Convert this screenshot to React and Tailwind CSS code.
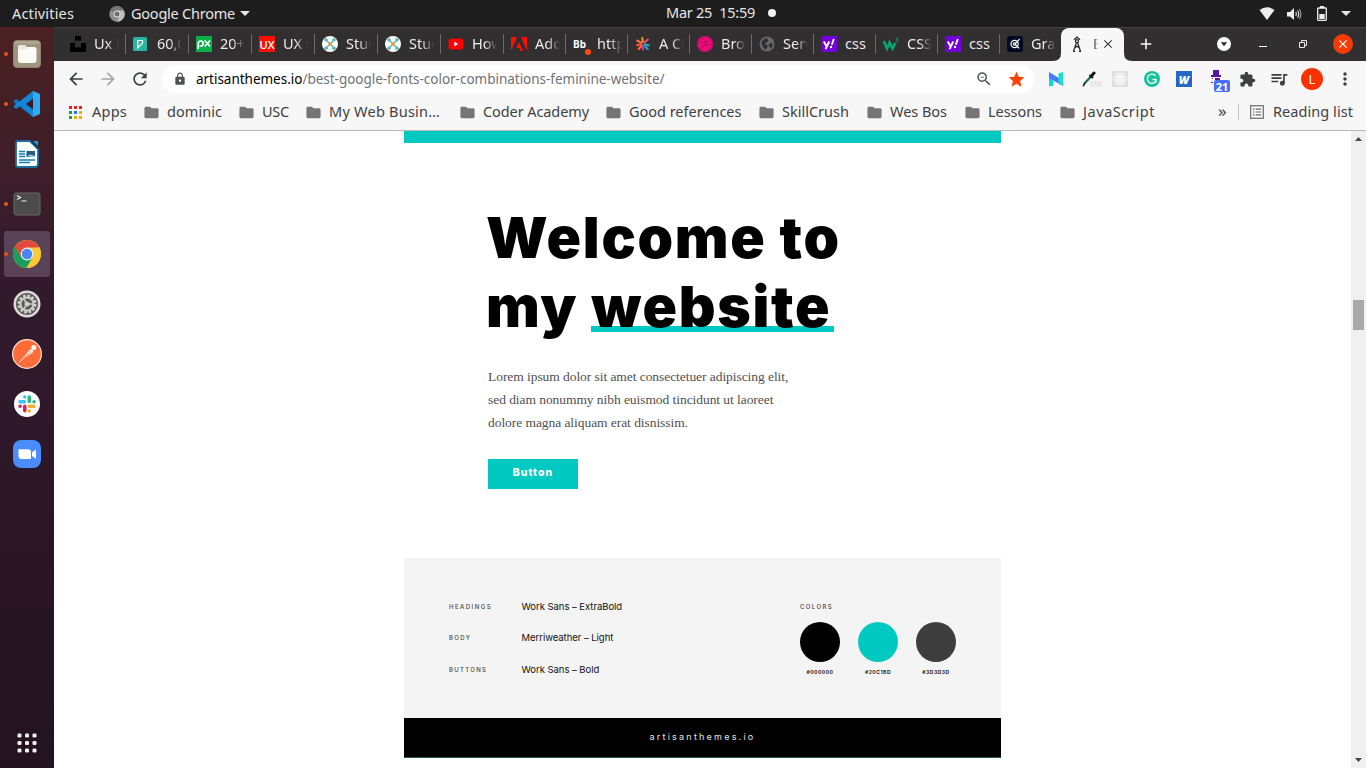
import React from "react";
import { MdArrowBack, MdArrowForward, MdRefresh, MdLock, MdZoomOut, MdStar, MdExtension, MdQueueMusic, MdMoreVert, MdFolder, MdClose, MdAdd, MdPublic } from "react-icons/md";
import { SiDribbble } from "react-icons/si";

const f = "size-4 shrink-0";

const Unsplash = () => (
  <svg className={f} viewBox="0 0 16 16"><path d="M5 0h6v4.500H5zM0 7h5v4.500h6V7h5v9H0z" fill="#000" /></svg>
);
const Teal = () => (
  <svg className={f} viewBox="0 0 16 16"><rect x="0" y="1" width="14" height="14" rx="1.500" fill="#2bb3a3" /><path d="M4.800 12V4.500h4.700v2.700L7.300 9.500H7L4.800 12z" fill="none" stroke="#fff" strokeWidth="1.200" /></svg>
);
const Px = () => (
  <svg className={f} viewBox="0 0 16 16"><rect width="16" height="16" fill="#0bb04b" /><path d="M2.200 13V7.500a2.500 2.500 0 1 1 2.500 2.500H3.500M8.700 4.500l5.300 6M14 4.500l-5.300 6" fill="none" stroke="#fff" strokeWidth="1.700" /></svg>
);
const Ux = () => (
  <span className="flex size-4 shrink-0 items-center justify-center bg-[#fa0f00] font-['Open_Sans'] text-[11px] leading-none font-semibold text-white">UX</span>
);
const Cross = () => (
  <svg className={f} viewBox="0 0 16 16"><circle cx="8" cy="8" r="8" fill="#fff" /><path d="M3 3l10 10M13 3L3 13" stroke="#5bb8b4" strokeWidth="1.500" /><g fill="#5bb8b4"><circle cx="4" cy="3.800" r="1.800" /><circle cx="12" cy="3.800" r="1.800" /><circle cx="4" cy="12.200" r="1.800" /><circle cx="12" cy="12.200" r="1.800" /></g><circle cx="8" cy="8" r="1.700" fill="#f59b23" /></svg>
);
const Tube = () => (
  <svg className={f} viewBox="0 0 16 16"><rect x="0.500" y="2.500" width="15" height="11" rx="2.800" fill="#f00" /><path d="M6.300 5.800v4.400L10.200 8z" fill="#fff" /></svg>
);
const Adobe = () => (
  <svg className={f} viewBox="0 0 16 16"><path d="M0 1h6L0 15zM16 1h-6l6 14zM8 6l4 9H9.300l-1.200-3H5.300z" fill="#fa0f00" /></svg>
);
const Bb = () => (
  <span className="relative flex size-4 shrink-0 items-center font-['Noto_Sans'] text-[10px] leading-none font-bold text-white">Bb<i className="absolute -right-0.5 -bottom-[3px] size-1.5 rounded-full bg-[#ff4a10]" /></span>
);
const Burst = () => (
  <svg className={f} viewBox="0 0 16 16" strokeWidth="2.100" strokeLinecap="round"><path d="M7.300 2l.5 4" stroke="#f7941d" /><path d="M2.300 4.500l4 2.500" stroke="#ff6d42" /><path d="M9.500 6.500l3.300-3" stroke="#d6508a" /><path d="M2 9.300l4-.8" stroke="#ff5630" /><path d="M10 8.500l3.700.8" stroke="#1bb9b0" /><path d="M6.500 10l-2.800 3" stroke="#ff6d42" /><path d="M8 9v4.800" stroke="#d9359a" /><path d="M10 10.300l2.700 2.700" stroke="#18a8d8" /></svg>
);
const Dribbble = () => (
  <span className="flex size-4 shrink-0 items-center justify-center rounded-full bg-[#f50a80]"><SiDribbble className="size-4 text-[#b5125f]" /></span>
);
const Globe = () => (
  <svg className={f} viewBox="0 0 16 16"><circle cx="8" cy="8" r="7.500" fill="#65696d" /><path d="M2.500 6.500Q4 2.500 8.500 2.300q-.5 1.700 1 2.200 0 1.500-2 1.500 0 2-2 1.700.5 1.300 3 1.300.5 2-1.500 4.500-3.500-1-4.500-7zM10.500 7.500q2.500-.5 3.300.5-.3 3-2.500 4.500-.3-2-1.800-2.500z" fill="#312f30" /></svg>
);
const Yahoo = () => (
  <svg className={f} viewBox="0 0 16 16"><rect width="16" height="16" fill="#7300d8" /><path d="M2.800 5.500l2.700 4.700M8.200 5.500L4.600 13.200M12.800 3l-2 5.700" fill="none" stroke="#fff" strokeWidth="1.900" /><circle cx="10" cy="11" r="1.200" fill="#fff" /></svg>
);
const W3 = () => (
  <svg className={f} viewBox="0 0 16 16"><path d="M.8 5l3.300 7.500L6.600 6.500l3 6L12.200 7" fill="none" stroke="#04aa6d" strokeWidth="2.600" /><path d="M12.600 2.500h2.200l-1.200 1.600q1.500.2 1.100 1.300-.6 1-2.100.3" fill="none" stroke="#04aa6d" strokeWidth=".9" /></svg>
);
const Graph = () => (
  <svg className={f} viewBox="0 0 16 16"><rect width="16" height="16" rx="2.500" fill="#030a22" /><g fill="none" stroke="#fff" strokeWidth="1.200"><circle cx="7.600" cy="8" r="3.600" /><circle cx="7.600" cy="8" r="1.200" /><path d="M8.500 7.300L12.600 3.200M8.500 8.900l3.800 3.500" /></g></svg>
);
const Compass = () => (
  <svg className={f} viewBox="0 0 16 16" fill="none" stroke="#222" strokeWidth="1.200"><path d="M5 3.800L8 1l3 2.800" /><circle cx="8" cy="5.200" r="1.500" /><path d="M7.300 7L4.500 15.300M8.700 7l2.800 8.300M5.800 11.500q2.200-2 4.400 0M4 15.300h2M10 15.300h2" /></svg>
);

const tabs = [
  [Unsplash, "Ux De"], [Teal, "60,00"], [Px, "20+ U"], [Ux, "UX vs"], [Cross, "Stud"], [Cross, "Stud"], [Tube, "How"],
  [Adobe, "Adob"], [Bb, "https"], [Burst, "A Co"], [Dribbble, "Brow"], [Globe, "Serv"], [Yahoo, "css"], [W3, "CSS "], [Yahoo, "css"], [Graph, "Grap"],
];

function TopBar() {
  return (
    <header className="grid h-[27px] shrink-0 grid-cols-3 items-center bg-[#1d1d1d] text-[14.5px] text-[#e6e6e6]">
      <div className="flex items-center pl-3">
        <span className="w-[97px] tracking-[0.16px]">Activities</span>
        <svg className="size-4" viewBox="0 0 16 16"><circle cx="8" cy="8" r="7.700" fill="#8d8d8d" /><path d="M8 8L1.300 4A7.700 7.700 0 0 1 14.700 4z" fill="#777" /><path d="M8 4.500h6.900A7.700 7.700 0 0 1 8 15.700L11 9z" fill="#bdbdbd" /><circle cx="8" cy="8" r="3.500" fill="#ddd" /><circle cx="8" cy="8" r="2.500" fill="#6e6e6e" /></svg>
        <span className="ml-1.5 tracking-[-0.23px]">Google Chrome</span>
        <svg className="ml-[5px] h-[5px] w-2.5" viewBox="0 0 10 5"><path d="M0 0h10L5 5z" fill="#e6e6e6" /></svg>
      </div>
      <div className="flex items-center justify-center gap-[13px] pb-px pl-[76px]">
        <span className="tracking-[-0.25px] whitespace-pre">Mar 25  15:59</span>
        <i className="size-2 rounded-full bg-[#f0f0f0]" />
      </div>
      <div className="flex items-center justify-end pr-[15px]">
        <svg className="h-[13px] w-4" viewBox="0 0 16 13"><path d="M8 13L0.500 3Q8-2.500 15.500 3z" fill="#eee" /></svg>
        <svg className="ml-3 h-[14px] w-[15px]" viewBox="0 0 15 14"><path d="M0 5h3l4-4v12L3 9.500H0z" fill="#eee" /><g fill="none" stroke="#ddd" strokeWidth="1.200"><path d="M8.800 5q1.200 2 0 4M10.600 3.500q2.200 3.500 0 7" /><path d="M12.300 2q3.200 5 0 10" stroke="#999" /></g></svg>
        <svg className="ml-[15px] h-[15px] w-2.5" viewBox="0 0 10 15"><path d="M3 0h4v2H3z" fill="#eee" /><rect x=".7" y="2" width="8.600" height="12.300" rx=".8" fill="none" stroke="#eee" strokeWidth="1.300" /><path d="M2.300 8h5.400v5H2.300z" fill="#eee" /></svg>
        <svg className="ml-[14px] h-[5px] w-2.5" viewBox="0 0 10 5"><path d="M0 0h10L5 5z" fill="#e6e6e6" /></svg>
      </div>
    </header>
  );
}

const dock = [
  [true, <svg className="size-7" viewBox="0 0 28 28"><rect x=".5" y=".5" width="27" height="27" rx="3.500" fill="#a0967f" stroke="#8d846f" /><rect x="1.500" y="1.500" width="25" height="2" rx="1" fill="#b5ac97" /><path d="M5 7q0-2 2-2h4q2 0 2.500 2H21q2.500 0 2.500 2.500V20q0 3-3 3H8q-3 0-3-3z" fill="#fbfaf6" /><path d="M5 7q0-2 2-2h4q2 0 2.500 2l-1 2.500H5z" fill="#ece8de" /></svg>],
  [true, <svg className="size-7" viewBox="0 0 28 28"><path d="M20 1L8 13 3.500 9.200 1 10.500v1.800L20 27z" fill="#0a7ac4" /><path d="M20 27L8 15l-4.500 3.800L1 17.500v-1.800L20 1z" fill="#1487d4" /><path d="M20 8.500v11L13 14z" fill="#3a1c27" /><path d="M20 1l7 3v20l-7 3z" fill="#33a7f2" /></svg>],
  [false, <svg className="size-7" viewBox="0 0 28 28"><path d="M5 1h12l8 8v15q0 3-3 3H5q-2 0-2-2V3q0-2 2-2z" fill="#fff" stroke="#1d6d9e" strokeWidth="1.800" /><path d="M17 1h8v8z" fill="#0d3a59" /><path d="M20 1h5v5z" fill="#2d9bc9" /><g stroke="#1580b4" strokeWidth="1.500"><path d="M6 11.500h6M6 14h6M6 16.500h6M6 20h16M6 22.500h11" /></g><rect x="13.500" y="11" width="8.500" height="6" fill="#245e86" /><path d="M14 16.500l3-2 5 1.500v1z" fill="#a9d5e8" /></svg>],
  [true, <svg className="size-7" viewBox="0 0 28 28"><rect x="1" y="3" width="26" height="22" rx="2" fill="#4b4c4a" stroke="#686967" /><path d="M4 5.500l3.500 2L4 9.500M8.500 11h5" fill="none" stroke="#eee" strokeWidth="1.200" /></svg>],
  [true, <svg className="size-7" viewBox="0 0 28 28"><circle cx="14" cy="14" r="14" fill="#fbc939" /><path d="M14 14L1.880 7A14 14 0 0 1 26.120 7z" fill="#e04a3c" /><path d="M1.880 7A14 14 0 0 0 13.500 28L19.600 17.200 14 14 8 17.500z" fill="#17a05d" /><path d="M1.880 7L8 17.500 14 8z" fill="#e04a3c" /><path d="M1.880 7A14 14 0 0 0 1.880 21L8 17.500z" fill="#17a05d" /><path d="M14 7.500h12.300A14 14 0 0 1 13.500 28l6-10.500z" fill="#fbc939" /><circle cx="14" cy="14" r="6.400" fill="#f2f2f2" /><circle cx="14" cy="14" r="5.200" fill="#4687f4" /></svg>],
  [false, <svg className="size-7" viewBox="0 0 28 28"><circle cx="14" cy="14" r="13.500" fill="#dcdbd8" /><circle cx="14" cy="14" r="11" fill="#5b5b59" /><circle cx="14" cy="14" r="8.300" fill="none" stroke="#cfcfcc" strokeWidth="2.400" strokeDasharray="2.700 1.650" /><circle cx="14" cy="14" r="6.500" fill="none" stroke="#cfcfcc" strokeWidth="2" /><circle cx="14" cy="14" r="2.500" fill="#cfcfcc" /><path d="M14 14l-3.500-5.500M14 14l-3.500 5.500M14 14h6" stroke="#cfcfcc" strokeWidth="1.500" /></svg>],
  [false, <svg className="size-[30px]" viewBox="0 0 30 30"><circle cx="15" cy="15" r="14.400" fill="#ff6c37" stroke="#fbe3d8" strokeWidth="1.200" /><path d="M7 23.500l5-6 5.500-6.500q1.500-1.500 3 0 1.300 1.300 0 2.800l-7.500 4.700-5 4.700z" fill="#fff" /><circle cx="21.800" cy="8.500" r="2.500" fill="#fff" /><path d="M12 17.500l2.500 2M15 14l2 2.200M17 12l2 2M10 20.500l9.500-8.500" stroke="#ff6c37" strokeWidth=".6" /></svg>],
  [false, <svg className="size-[26px]" viewBox="0 0 26 26"><circle cx="13" cy="13" r="13" fill="#fff" /><g strokeWidth="3.500" strokeLinecap="round"><path d="M6 10.800h4.500M10.800 6v.1" stroke="#36c5f0" /><path d="M15.300 6v4.500M20 10.800h.1" stroke="#2eb67d" /><path d="M15.300 15.300h4.500M15.300 20v.1" stroke="#ecb22e" /><path d="M10.800 15.300v4.500M6 15.300h.1" stroke="#e01e5a" /></g></svg>],
  [false, <svg className="size-7" viewBox="0 0 28 28"><rect width="28" height="28" rx="8" fill="#4a8cfb" /><path d="M5.500 9.300H15q3 0 3 3V19H8.500q-3 0-3-3zM19 12.300l4-2.800v9.300l-4-2.800z" fill="#fff" /></svg>],
];

function Dock() {
  return (
    <nav className="flex w-[54px] shrink-0 flex-col bg-linear-to-b from-[#4b2122] via-[#321a2d] via-35% to-[#23121f] px-1 pt-1">
      {dock.map(([dot, icon], i) => (
        <div key={i} className={`mb-1 flex h-[46px] items-center rounded-[3px] ${i === 4 ? "bg-[#5a4257]" : ""}`}>
          <i className={`size-1 rounded-full ${dot ? "bg-[#e95420]" : ""}`} />
          <span className="flex w-[38px] justify-center">{icon}</span>
        </div>
      ))}
      <svg className="mt-auto mb-[15px] ml-[13px] size-5" viewBox="0 0 20 20" fill="#f2f2f2">
        {[0, 7.5, 15].map((y) => [0, 7.5, 15].map((x) => <rect key={x + "-" + y} x={x + 0.5} y={y + 0.5} width="4" height="4" rx="1.200" />))}
      </svg>
    </nav>
  );
}

function TabStrip() {
  return (
    <div className="flex h-[34px] shrink-0 border-t border-[#454545] bg-[#312f30] pl-[9px] text-[14.5px] text-[#eceaea]">
      {tabs.map(([Icon, label], i) => (
        <div key={i} className={`flex h-8 shrink-0 items-center ${i < 7 ? "w-[63px]" : "w-[62px]"} ${i === 15 ? "" : "bg-[linear-gradient(#6c6a6b,#6c6a6b)] bg-[length:1px_20px] bg-[position:right_center] bg-no-repeat"}`}>
          <span className="flex w-[31px] shrink-0 pl-[7px]"><Icon /></span>
          <span className={`w-[25px] overflow-hidden whitespace-nowrap ${label === "css" ? "" : "mask-r-from-50% mask-r-to-100%"}`}>{label}</span>
        </div>
      ))}
      <div className="relative -ml-px flex h-full w-[63px] shrink-0 items-center rounded-t-lg bg-[#f7f7f7] pb-px pl-2 text-[#444]">
        <svg className="absolute bottom-0 -left-2 size-2" viewBox="0 0 8 8"><path d="M8 0v8H0q8 0 8-8z" fill="#f7f7f7" /></svg>
        <svg className="absolute -right-2 bottom-0 size-2" viewBox="0 0 8 8"><path d="M0 0v8h8Q0 8 0 0z" fill="#f7f7f7" /></svg>
        <Compass />
        <span className="ml-2 w-[5px] overflow-hidden mask-r-from-30% mask-r-to-100%">B</span>
        <MdClose className="ml-[3px] size-[14px] text-[#3c3c3c]" />
      </div>
      <div className="flex h-8 grow items-center pr-[13px] pl-[13px]">
        <MdAdd className="size-[18px] text-white" />
        <svg className="mr-[28px] ml-auto size-[14px]" viewBox="0 0 14 14"><circle cx="7" cy="7" r="7" fill="#fff" /><path d="M3.800 5.300h6.400L7 9.300z" fill="#312f30" /></svg>
        <i className="mt-[4px] mr-[32px] h-px w-2 bg-white" />
        <svg className="mr-[26px] size-2" viewBox="0 0 8 8" fill="none" stroke="#e8e8e8"><path d="M.5 2.500h5v5h-5zM2.500 2.500V.5h5v5h-2" /></svg>
        <span className="flex size-5 items-center justify-center rounded-full bg-[#f53c05]"><MdClose className="size-3.5 text-white" /></span>
      </div>
    </div>
  );
}

function Toolbar() {
  return (
    <div className="flex h-[36px] shrink-0 items-center bg-[#f7f7f7] pl-[12px] text-[#3c3f42]">
      <MdArrowBack className="size-5" />
      <MdArrowForward className="ml-3 size-5 text-[#a5a6a8]" />
      <MdRefresh className="ml-3 size-5" />
      <div className="ml-3 flex h-7 w-[872px] items-center rounded-full bg-white pr-2 pl-[11px] text-[13.5px]">
        <MdLock className="size-[14px] text-[#505356]" />
        <span className="ml-[9px] tracking-[-0.02px] whitespace-nowrap text-[#6f7276]"><span className="text-black">artisanthemes.io</span>/best-google-fonts-color-combinations-feminine-website/</span>
        <MdZoomOut className="ml-auto size-[18px] text-[#505356]" />
        <MdStar className="ml-3.5 size-[19px] text-[#fa4405]" />
      </div>
      <svg className="ml-[15px] size-[14px]" viewBox="0 0 14 14"><path d="M0 0l4.500 4v10H0z" fill="#16d6d1" /><path d="M0 0l14 8.500V14L0 6z" fill="#4b79f6" /><path d="M9.500 1.500L14 0v14l-4.500-4z" fill="#14e5c4" /></svg>
      <svg className="ml-[19px] h-4 w-5" viewBox="0 0 20 16"><rect x="8" y="10" width="12" height="6" fill="#e9e9e9" /><path d="M2 13L8.500 6" stroke="#1c7048" strokeWidth="2.200" /><path d="M1 15.300L3 12" stroke="#222" strokeWidth="1.500" /><path d="M7.500 4l3.500 3" stroke="#151515" strokeWidth="1.800" /><path d="M9 5.500l3-3.500" stroke="#151515" strokeWidth="3" strokeLinecap="round" /></svg>
      <svg className="ml-[10px] size-4" viewBox="0 0 16 16"><rect width="16" height="16" fill="#dfdfdf" /><g fill="none" stroke="#fff"><ellipse cx="8" cy="8" rx="6.500" ry="2.500" /><ellipse cx="8" cy="8" rx="6.500" ry="2.500" transform="rotate(60 8 8)" /><ellipse cx="8" cy="8" rx="6.500" ry="2.500" transform="rotate(120 8 8)" /></g><circle cx="8" cy="8" r="1.500" fill="#fff" /></svg>
      <svg className="ml-4 size-4" viewBox="0 0 16 16"><circle cx="8" cy="8" r="8" fill="#15c39a" /><path d="M11.500 4.800A4.600 4.600 0 1 0 12 10M8.500 8.500h3.500v3" fill="none" stroke="#fff" strokeWidth="1.400" /></svg>
      <span className="ml-4 flex size-4 items-center justify-center bg-[#2767c5] font-['Open_Sans'] text-[11px] leading-none font-extrabold text-white italic">W</span>
      <span className="relative ml-[19px] flex size-[18px] items-start">
        <svg className="h-[14px] w-3" viewBox="0 0 12 14" fill="#5b10a8"><path d="M2 0h6v5h2v2H0V5h2zM1 8h1v1H1zM0 12h2v1H0zM4 8h5v2H4z" /></svg>
        <b className="absolute top-[10px] left-[3px] flex h-3 w-4 items-center justify-center rounded-[2px] bg-[#4a6cf7] text-[11px] leading-none text-white">21</b>
      </span>
      <MdExtension className="ml-[10px] size-[17px]" />
      <MdQueueMusic className="ml-[13px] size-5" />
      <span className="ml-[12px] flex size-[22px] items-center justify-center rounded-full bg-[#fb3200] text-[13px] leading-none text-white">L</span>
      <MdMoreVert className="ml-[12px] size-5" />
    </div>
  );
}

const marks = [
  ["dominic", "w-[95px]", "tracking-[0.05px]"], ["USC", "w-[67px]", "tracking-[-0.24px]"], ["My Web Busin…", "w-[154px]", "tracking-[0.24px]"],
  ["Coder Academy", "w-[146px]", "tracking-[-0.09px]"], ["Good references", "w-[153px]", "tracking-[-0.02px]"], ["SkillCrush", "w-[108px]", ""],
  ["Wes Bos", "w-[98px]", "tracking-[-0.03px]"], ["Lessons", "w-[95px]", "tracking-[-0.05px]"], ["JavaScript", "w-[159px]", "tracking-[0.56px]"],
];
const appColors = ["fill-[#f01d1d]", "fill-[#f01d1d]", "fill-[#f01d1d]", "fill-[#10a05a]", "fill-[#2474f0]", "fill-[#f5a800]", "fill-[#10a05a]", "fill-[#f5a800]", "fill-[#f5a800]"];

function Bookmarks() {
  return (
    <div className="flex h-[34px] shrink-0 items-center border-b border-[#b9b9b9] bg-[#f7f7f7] pb-[3px] pl-[15px] text-[14.5px] whitespace-nowrap text-[#3f4144]">
      <svg className="size-[13px]" viewBox="0 0 13 13">{appColors.map((c, i) => <rect key={i} className={c} x={(i % 3) * 5} y={Math.floor(i / 3) * 5} width="3" height="3" />)}</svg>
      <span className="ml-2.5 w-[51px] tracking-[0.24px]">Apps</span>
      {marks.map(([name, w, track]) => (
        <span key={name} className={`flex items-center ${w}`}>
          <MdFolder className="size-[17px] text-[#757575]" />
          <span className={`ml-[7px] ${track}`}>{name}</span>
        </span>
      ))}
      <span className="w-[20px] pb-0.5 text-[17px]">»</span>
      <i className="mr-[11px] h-4 w-px bg-[#c4c4c4]" />
      <svg className="size-[14px] shrink-0" viewBox="0 0 14 14" fill="none" stroke="#6a6a6a" strokeWidth="1.200"><rect x=".7" y=".7" width="12.600" height="12.600" /><path d="M3 4.200h1.500M3 7h1.500M3 9.800h1.500M5.700 4.200H11M5.700 7H11M5.700 9.800H11" /></svg>
      <span className="ml-[9px] tracking-[0.06px]">Reading list</span>
    </div>
  );
}

const specs = [["HEADINGS", "tracking-[1.48px]", "Work Sans – ExtraBold"], ["BODY", "tracking-[1.35px]", "Merriweather – Light"], ["BUTTONS", "tracking-[1.3px]", "Work Sans – Bold"]];
const colors = [["#000000", "bg-black"], ["#20C1BD", "bg-[#00c9c2]"], ["#3D3D3D", "bg-[#3d3d3d]"]];

function Poster() {
  return (
    <article className="ml-[350px] flex w-[597px] flex-col font-['Inter']">
      <div className="h-[12px] bg-[#00c9c2]" />
      <section className="flex h-[415px] flex-col items-start pt-[60px] pl-[84px]">
        <h1 className="-ml-[2px] text-[57px] leading-[69px] font-black tracking-[1.7px] whitespace-nowrap text-black">
          Welcome to<br />my <span className="bg-[linear-gradient(#00c9c2,#00c9c2)] bg-[length:100%_6px] bg-[position:0_54px] bg-no-repeat pr-[3px]">website</span>
        </h1>
        <p className="mt-[24px] font-['Liberation_Serif'] text-[13.5px] leading-[23px] tracking-[-0.06px] whitespace-nowrap text-[#505050]">
          Lorem ipsum dolor sit amet consectetuer adipiscing elit,<br />sed diam nonummy nibh euismod tincidunt ut laoreet<br />dolore magna aliquam erat disnissim.
        </p>
        <button className="mt-[25px] h-[30px] w-[90px] bg-[#00c9c2] pb-0.5 text-[10.5px] font-extrabold tracking-[1px] text-white">Button</button>
      </section>
      <section className="flex h-[160px] justify-between bg-[#f4f4f4] pt-[33px] pr-[45px] pl-[45px]">
        <dl className="grid h-[95px] grid-cols-[72.5px_auto] grid-rows-3 items-center">
          {specs.map(([k, t, v]) => (
            <React.Fragment key={k}>
              <dt className={`pb-px text-[6px] font-medium text-[#444] ${t}`}>{k}</dt>
              <dd className="text-[9.5px] tracking-[-0.04px] text-[#111]">{v}</dd>
            </React.Fragment>
          ))}
        </dl>
        <div className="flex w-[156px] flex-col pt-[11px]">
          <h2 className="text-[6px] leading-[10px] font-medium tracking-[1.42px] text-[#444]">COLORS</h2>
          <div className="mt-2.5 flex justify-between">
            {colors.map(([hex, c]) => (
              <div key={hex} className="flex w-10 flex-col items-center">
                <i className={`size-10 rounded-full ${c}`} />
                <span className="mt-[5px] text-[5px] leading-[10px] font-bold tracking-[0.5px] text-[#222]">{hex}</span>
              </div>
            ))}
          </div>
        </div>
      </section>
      <footer className="flex h-10 items-center justify-center border-b border-[#285c50] bg-black pb-px text-[9px] tracking-[2.22px] text-[#e4e4e4]">artisanthemes.io</footer>
    </article>
  );
}

export default function App() {
  return (
    <div className="flex h-[768px] w-[1366px] flex-col overflow-hidden bg-white font-['Noto_Sans',sans-serif]">
      <TopBar />
      <div className="flex min-h-0 grow">
        <Dock />
        <main className="flex min-w-0 grow flex-col">
          <TabStrip />
          <Toolbar />
          <Bookmarks />
          <div className="flex min-h-0 grow">
            <div className="grow"><Poster /></div>
            <aside className="flex w-[15px] flex-col items-center bg-[#f0f0f0]">
              <svg className="mt-[6px] h-1 w-[7px]" viewBox="0 0 7 4"><path d="M3.500 0L7 4H0z" fill="#444" /></svg>
              <i className="mt-[159px] h-[30px] w-[11px] bg-[#a9a9a9]" />
              <svg className="mt-auto mb-[6px] h-1 w-[7px]" viewBox="0 0 7 4"><path d="M0 0h7L3.500 4z" fill="#444" /></svg>
            </aside>
          </div>
        </main>
      </div>
    </div>
  );
}
